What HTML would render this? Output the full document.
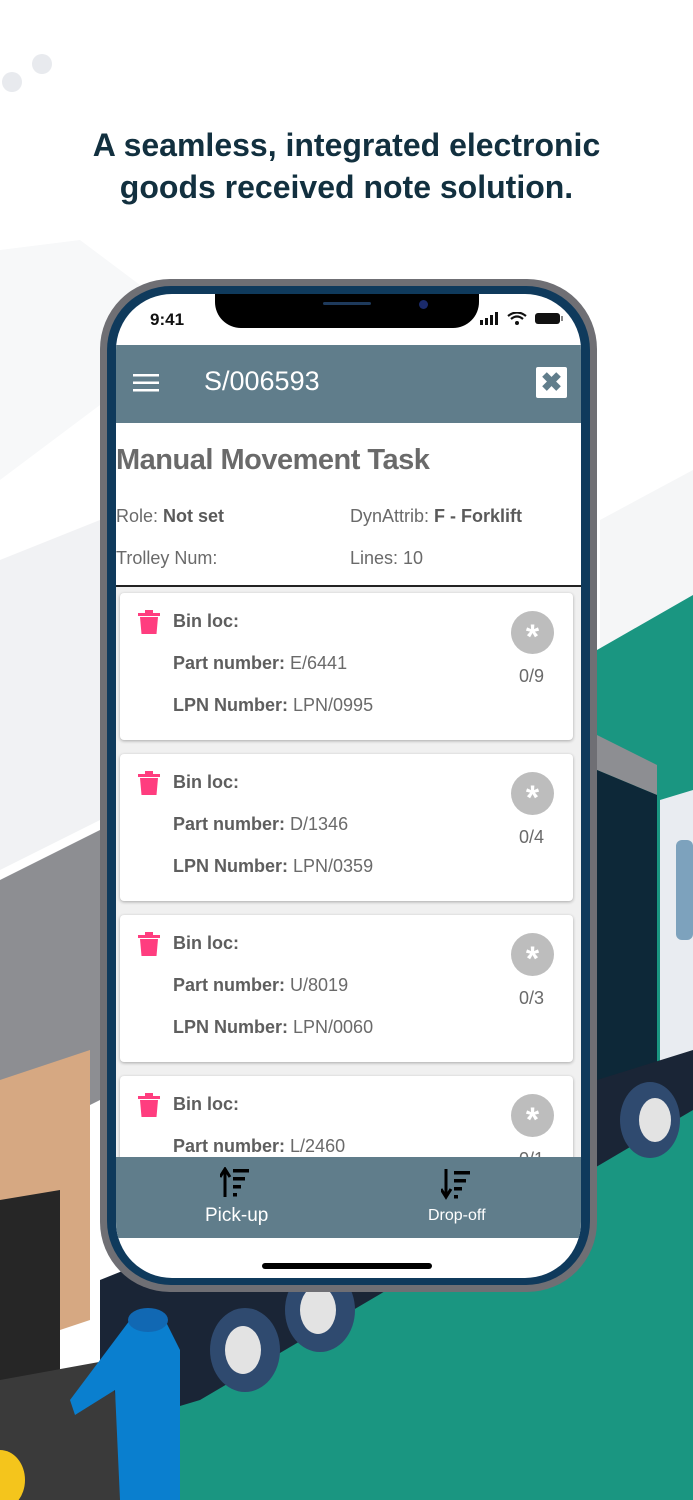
<!DOCTYPE html>
<html><head><meta charset="utf-8">
<style>
*{margin:0;padding:0;box-sizing:border-box}
body{width:693px;height:1500px;overflow:hidden;position:relative;background:#fff;font-family:"Liberation Sans",Arial,sans-serif}
#bg{position:absolute;left:0;top:0}
h1{position:absolute;top:124px;left:0;width:693px;text-align:center;font-size:32px;line-height:42px;font-weight:bold;color:#12303f}
.phone{position:absolute;left:100px;top:279px;width:497px;height:1013px;border-radius:70px;background:#6f6f74}
.navy{position:absolute;left:107px;top:286px;width:483px;height:999px;border-radius:64px;background:#0f3a5c}
.screen{position:absolute;left:116px;top:294px;width:465px;height:984px;border-radius:56px;background:#fff;overflow:hidden}
.notch{position:absolute;left:99px;top:0;width:264px;height:34px;background:#000;border-radius:0 0 26px 26px}
.time{position:absolute;left:34px;top:16px;font-size:17px;font-weight:bold;color:#111}
.hdr{position:absolute;left:0;top:51px;width:465px;height:78px;background:#607d8b}
.hdr .t{position:absolute;left:88px;top:21px;color:#fff;font-size:27px}
.x{position:absolute;right:14px;top:22px;width:31px;height:31px;background:#fff;border-radius:2px;color:#607d8b;font-weight:bold;font-size:26px;text-align:center;line-height:31px}
.title{position:absolute;left:0;top:150px;font-size:29px;font-weight:bold;color:#6a6a6a;letter-spacing:-0.5px}
.inf{position:absolute;font-size:18px;color:#6a6a6a}
.inf b{color:#5a5a5a}
.div{position:absolute;left:0;top:291px;width:465px;height:2px;background:#222}
.list{position:absolute;left:0;top:293px;width:465px;height:570px;background:#f0f0f0}
.card{position:absolute;left:4px;width:453px;height:147px;background:#fff;border-radius:4px;box-shadow:0 1px 3px rgba(0,0,0,.3)}
.card .l{position:absolute;left:53px;font-size:18px;color:#6a6a6a}
.card .l b{color:#5e5e5e}
.circ{position:absolute;left:391px;top:18px;width:43px;height:43px;border-radius:50%;background:#bdbdbd;color:#fff;font-size:34px;text-align:center;line-height:52px;font-weight:bold}
.cnt{position:absolute;left:399px;top:73px;font-size:18px;color:#6a6a6a}
.bin{position:absolute;left:18px;top:17px}
.bot{position:absolute;left:0;top:863px;width:465px;height:81px;background:#607d8b;color:#fff}
.home{position:absolute;left:146px;top:969px;width:170px;height:6px;border-radius:3px;background:#000}
</style></head><body>
<svg id="bg" width="693" height="1500" viewBox="0 0 693 1500">
<rect width="693" height="1500" fill="#fff"/>
<polygon points="0,250 80,240 200,330 0,480" fill="#f7f8f9"/>
<polygon points="0,560 100,520 100,820 0,870" fill="#f1f2f4"/>
<polygon points="600,520 693,470 693,600 600,650" fill="#f5f6f7"/>
<g fill="#e8eaee"><circle cx="12" cy="82" r="10"/><circle cx="42" cy="64" r="10"/></g>
<polygon points="597,650 693,595 693,1500 120,1500 120,1450" fill="#1a9681"/>
<polygon points="0,880 100,830 100,1100 0,1150" fill="#8d8e92"/>
<polygon points="597,735 657,765 657,795 597,770" fill="#8d8e92"/>
<polygon points="597,770 657,795 657,1090 597,1110" fill="#0d2838"/>
<polygon points="660,800 693,790 693,1075 660,1080" fill="#e9ecf1"/>
<rect x="676" y="840" width="17" height="100" rx="6" fill="#7da2bd"/>
<polygon points="100,1280 597,1080 693,1050 693,1110 200,1400 100,1430" fill="#1a2536"/>
<g fill="#2f4a6f"><ellipse cx="650" cy="1120" rx="30" ry="38"/><ellipse cx="320" cy="1310" rx="35" ry="42"/><ellipse cx="245" cy="1350" rx="35" ry="42"/></g>
<g fill="#e3e3e3"><ellipse cx="655" cy="1120" rx="16" ry="22"/><ellipse cx="318" cy="1310" rx="18" ry="24"/><ellipse cx="243" cy="1350" rx="18" ry="24"/></g>
<polygon points="0,1080 90,1050 90,1320 0,1350" fill="#d6a882"/>
<polygon points="0,1200 60,1190 60,1500 0,1500" fill="#262626"/>
<polygon points="0,1380 110,1360 130,1500 0,1500" fill="#3a3a3a"/>
<ellipse cx="0" cy="1480" rx="25" ry="30" fill="#f4c51c"/>
<path d="M130,1320 q20,-15 35,0 l15,30 l0,150 l-60,0 l-5,-110 l-40,25 l-5,-15 z" fill="#0a7fcf"/>
<ellipse cx="148" cy="1320" rx="20" ry="12" fill="#1168b3"/>
</svg>
<h1>A seamless, integrated electronic<br>goods received note solution.</h1>
<div class="phone"></div><div class="navy"></div>
<div class="screen">
<div class="notch"><div style="position:absolute;left:108px;top:8px;width:48px;height:3px;background:#1e3a5c;border-radius:2px"></div><div style="position:absolute;left:204px;top:6px;width:9px;height:9px;background:#1a2a6a;border-radius:50%"></div></div>
<div class="time">9:41</div>
<svg style="position:absolute;left:364px;top:18px" width="86" height="14"><rect x="0" y="8" width="3" height="5" fill="#111"/><rect x="5" y="6" width="3" height="7" fill="#111"/><rect x="10" y="3" width="3" height="10" fill="#111"/><rect x="15" y="0" width="3" height="13" fill="#111"/><path d="M28,4 q9,-7 18,0 M31,7 q6,-5 12,0" stroke="#111" stroke-width="2.2" fill="none"/><circle cx="37" cy="11" r="2" fill="#111"/><rect x="55" y="1" width="25" height="11" rx="3" fill="#111"/><rect x="81" y="4" width="2" height="5" fill="#888"/></svg>
<div class="hdr"><svg style="position:absolute;left:17px;top:29px" width="26" height="18"><rect y="0" width="26" height="2.5" fill="#fff"/><rect y="7.5" width="26" height="2.5" fill="#fff"/><rect y="15" width="26" height="2.5" fill="#fff"/></svg><div class="t">S/006593</div><div class="x">✖</div></div>
<div class="title">Manual Movement Task</div>
<div class="inf" style="left:0;top:212px">Role: <b>Not set</b></div>
<div class="inf" style="left:234px;top:212px">DynAttrib: <b>F - Forklift</b></div>
<div class="inf" style="left:0;top:254px">Trolley Num:</div>
<div class="inf" style="left:234px;top:254px">Lines: 10</div>
<div class="div"></div>
<div class="list">
<div class="card" style="top:6px"><svg class="bin" width="22" height="24"><rect x="0" y="3" width="22" height="3" fill="#ff3d7f"/><rect x="7" y="0" width="8" height="3" fill="#ff3d7f"/><path d="M2,7 h18 l-1.5,17 h-15 z" fill="#ff3d7f"/></svg><div class="l" style="top:18px"><b>Bin loc:</b></div><div class="l" style="top:60px"><b>Part number:</b> E/6441</div><div class="l" style="top:102px"><b>LPN Number:</b> LPN/0995</div><div class="circ">*</div><div class="cnt">0/9</div></div>
<div class="card" style="top:167px"><svg class="bin" width="22" height="24"><rect x="0" y="3" width="22" height="3" fill="#ff3d7f"/><rect x="7" y="0" width="8" height="3" fill="#ff3d7f"/><path d="M2,7 h18 l-1.5,17 h-15 z" fill="#ff3d7f"/></svg><div class="l" style="top:18px"><b>Bin loc:</b></div><div class="l" style="top:60px"><b>Part number:</b> D/1346</div><div class="l" style="top:102px"><b>LPN Number:</b> LPN/0359</div><div class="circ">*</div><div class="cnt">0/4</div></div>
<div class="card" style="top:328px"><svg class="bin" width="22" height="24"><rect x="0" y="3" width="22" height="3" fill="#ff3d7f"/><rect x="7" y="0" width="8" height="3" fill="#ff3d7f"/><path d="M2,7 h18 l-1.5,17 h-15 z" fill="#ff3d7f"/></svg><div class="l" style="top:18px"><b>Bin loc:</b></div><div class="l" style="top:60px"><b>Part number:</b> U/8019</div><div class="l" style="top:102px"><b>LPN Number:</b> LPN/0060</div><div class="circ">*</div><div class="cnt">0/3</div></div>
<div class="card" style="top:489px"><svg class="bin" width="22" height="24"><rect x="0" y="3" width="22" height="3" fill="#ff3d7f"/><rect x="7" y="0" width="8" height="3" fill="#ff3d7f"/><path d="M2,7 h18 l-1.5,17 h-15 z" fill="#ff3d7f"/></svg><div class="l" style="top:18px"><b>Bin loc:</b></div><div class="l" style="top:60px"><b>Part number:</b> L/2460</div><div class="circ">*</div><div class="cnt">0/1</div></div>
</div>
<div class="bot">
<svg style="position:absolute;left:104px;top:10px" width="32" height="32"><path d="M5,30 V4 M0,10 L5,2 L10,10" stroke="#000" stroke-width="3" fill="none"/><rect x="13" y="2" width="16" height="3.5"/><rect x="13" y="10" width="12" height="3.5"/><rect x="13" y="18" width="8" height="3.5"/><rect x="13" y="26" width="4" height="3.5"/></svg>
<div style="position:absolute;left:89px;top:48px;font-size:19px">Pick-up</div>
<svg style="position:absolute;left:325px;top:12px" width="32" height="32"><path d="M5,0 V26 M0,20 L5,28 L10,20" stroke="#000" stroke-width="3" fill="none"/><rect x="13" y="2" width="16" height="3.5"/><rect x="13" y="10" width="12" height="3.5"/><rect x="13" y="18" width="8" height="3.5"/><rect x="13" y="26" width="4" height="3.5"/></svg>
<div style="position:absolute;left:312px;top:50px;font-size:16px">Drop-off</div>
</div>
<div class="home"></div>
</div>
</body></html>
